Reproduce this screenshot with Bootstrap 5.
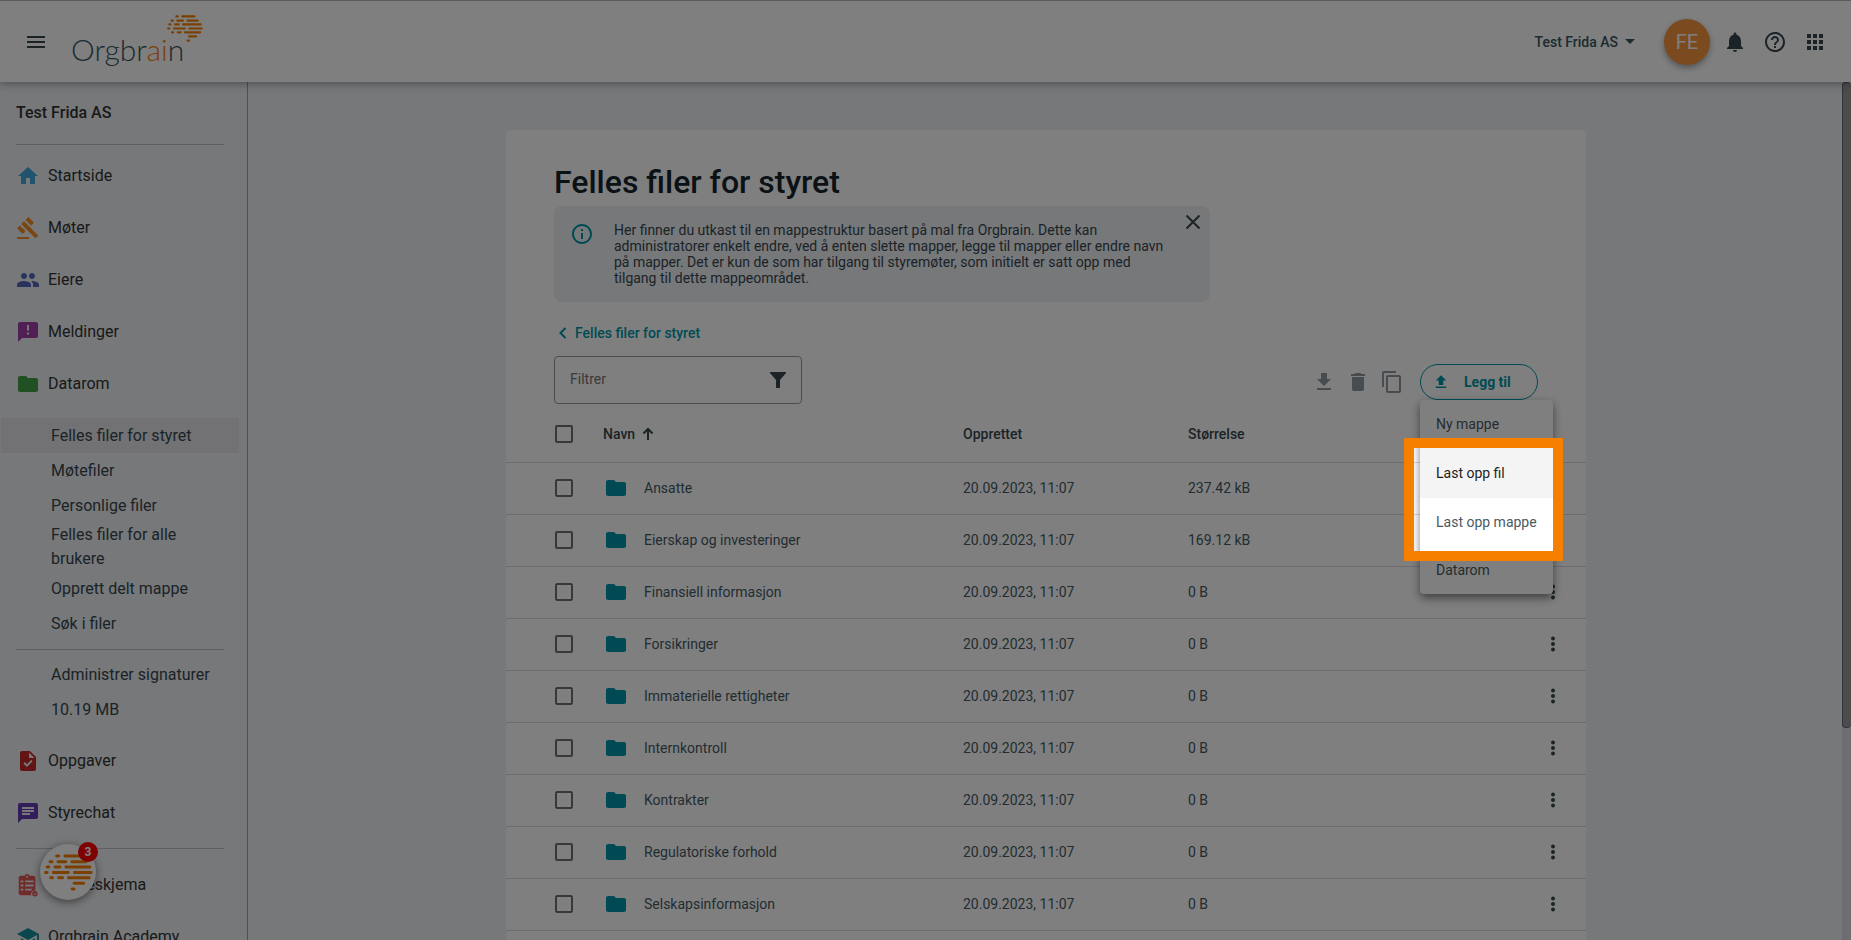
<!DOCTYPE html>
<html lang="nb">
<head>
<meta charset="utf-8">
<meta name="viewport" content="width=device-width, initial-scale=1">
<title>Felles filer for styret – Orgbrain</title>
<link href="https://cdn.jsdelivr.net/npm/bootstrap@5.3.0/dist/css/bootstrap.min.css" rel="stylesheet">
<style>
  :root { --teal: #0097a7; --ink: #37474f; --canvas: #eef0f4; --orange: #f77f00; }
  body { font-family: Roboto, "Noto Sans", sans-serif; font-size: 14px; line-height: 20px; color: var(--ink); background: var(--canvas); }
  svg { display: block; flex: none; fill: currentColor; }
  button { border: 0; background: none; padding: 0; color: inherit; }

  .topbar { height: 82px; background: #fff; border-top: 1px solid #b8b8b8; box-shadow: 0 2px 8px rgba(0,0,0,.35); z-index: 5; padding: 0 24px; }
  .brand { color: #37565f; margin-left: 24px; }
  .brand text { font-family: Lato, sans-serif; font-weight: 300; font-size: 30px; }
  .org-switch { font-size: 14px; font-weight: 500; color: #37565f; }
  .avatar { width: 46px; height: 46px; background: #f7943c; color: #fff; font-size: 20px; box-shadow: 0 3px 6px rgba(0,0,0,.35); margin-left: 26px; margin-right: 13px; }

  .workspace { min-height: 0; }
  .sidebar { width: 248px; border-right: 1px solid #9a9ea2; font-size: 16px; line-height: 24px; color: #333; }
  .sidebar a { text-decoration: none; color: inherit; }
  .sidebar hr { margin: 0 23px 0 16px; border-color: #bdbfc3; opacity: 1; }
  .sidebar hr.spaced { margin-top: 9px; margin-bottom: 10px; }
  .sidebar hr.tight { margin-top: 8px; margin-bottom: 7px; }
  .org-name { padding: 19px 16px 19px; font-weight: 500; }
  .main-group { padding: 5px 0 8px; }
  .main-link { height: 52px; padding-left: 16px; gap: 8px; }
  .sub-link { display: flex; align-items: center; min-height: 35px; margin: 0 8px 0 1px; padding-left: 50px; padding-right: 16px; color: var(--ink) !important; }
  .sub-link.current { background: #e4e5e9; }

  .sheet-area { padding-left: 2px; }
  .sheet { width: 100%; max-width: 1080px; margin: 48px auto 0; background: #fff; border-radius: 4px 4px 0 0; }
  .sheet-head { padding: 32px 48px 0; }
  h1 { font-size: 32px; line-height: 40px; font-weight: 500; color: #14242c; margin: 0 0 4px; }
  .notice { max-width: 656px; min-height: 96px; background: var(--canvas); border-radius: 8px; padding: 8px 8px 16px 16px; }
  .notice p { font-size: 14px; line-height: 16px; margin: 8px 0 0 20px; max-width: 556px; }
  .back-link { color: var(--teal); font-weight: 500; text-decoration: none; margin: 21px 0 13px; }
  .filter-box { width: 248px; height: 48px; border: 1px solid #999; border-radius: 4px; padding: 0 11px 0 15px; }
  .filter-box input { min-width: 0; border: 0; outline: 0; background: none; padding: 0 0 2px; color: #666; }
  .filter-box input::placeholder { color: #757575; opacity: 1; }
  .tools { color: #8d989e; margin-top: 4px; gap: 10px; }
  .add-btn { width: 118px; height: 36px; border: 1px solid var(--teal); border-radius: 18px; color: var(--teal); font-weight: 700; padding-left: 11px; gap: 14px; }
  .add-wrap { margin-left: 6px; }
  .add-menu { position: absolute; top: 36px; left: 0; width: 133px; background: #fff; border-radius: 4px; box-shadow: 0 4px 10px rgba(0,0,0,.5); z-index: 30; }
  .add-menu button { display: block; width: 100%; height: 48px; padding: 0 16px; text-align: left; white-space: nowrap; color: #4b5a61; }
  .add-menu button.hovered { height: 50px; background: #f4f4f4; color: #222; }
  /* Frames the two upload choices and dims the rest of the page */
  .spotlight { position: absolute; top: 38px; left: -16px; width: 159px; height: 123px; border: 10px solid var(--orange); box-shadow: 0 0 0 3000px rgba(0,0,0,.5); pointer-events: none; }

  .files { width: 100%; table-layout: fixed; border-collapse: collapse; }
  .files th { height: 58px; font-weight: 500; padding: 3px 0 0; }
  .files td { height: 52px; padding: 0; color: #455a64; }
  .files tr { border-bottom: 1px solid #d8d8d8; }
  .files th:first-child, .files td:first-child { padding-left: 49px; }
  .files input { appearance: none; display: block; width: 18px; height: 18px; margin: 0; border: 2px solid #707070; border-radius: 2px; }
  .files td svg { color: var(--teal); }
  .files td button svg { color: var(--ink); }
  .col-check { width: 97px; }
  .col-date { width: 225px; }
  .col-size { width: 332px; }
  .col-more { width: 66px; }

  .scroll-track { width: 9px; background: #dcdde1; }
  .scroll-thumb { height: 75.3%; background: #989898; border: 1px solid #5b6b74; border-right: 0; border-radius: 4px; }

  .chat-bubble { position: absolute; left: 40px; bottom: 40px; width: 56px; height: 56px; border-radius: 50%; background: #fff; color: var(--orange); box-shadow: 0 2px 8px rgba(0,0,0,.5); z-index: 20; }
  .chat-count { position: absolute; top: -2px; right: -2px; width: 20px; height: 20px; border-radius: 50%; background: #ff0000; color: #fff; font-size: 12px; font-weight: 700; }
</style>
</head>
<body class="vh-100 overflow-hidden d-flex flex-column position-relative">

<svg width="0" height="0" class="position-absolute" aria-hidden="true">
  <symbol id="brain" viewBox="130 400 149 112"><path fill="none" stroke="currentColor" stroke-width="9" stroke-linecap="round" d="M168.500 406h6M193.500 406h50M148.500 423h6M172.500 423h24M214.500 423h43M139.500 439h5M163.500 439h15M196.500 439h73M134.500 456h5M158.500 456h45M222.500 456h51M150.500 472h5M174.500 472h12M204.500 472h63M221.500 489h29M215.500 506h6"/></symbol>
  <symbol id="folder" viewBox="0 0 24 24"><path d="M10 4H4c-1.100 0-2 .9-2 2v12c0 1.100.9 2 2 2h16c1.100 0 2-.9 2-2V8c0-1.100-.9-2-2-2h-8z"/></symbol>
  <symbol id="dots" viewBox="0 0 24 24"><circle cx="12" cy="6.500" r="2"/><circle cx="12" cy="12" r="2"/><circle cx="12" cy="17.500" r="2"/></symbol>
</svg>

<header class="topbar d-flex align-items-center flex-shrink-0 position-relative">
  <button aria-label="Meny"><svg width="24" height="24" viewBox="0 0 24 24"><path d="M3 18h18v-2H3zm0-5h18v-2H3zm0-7v2h18V6z"/></svg></button>
  <a class="brand" href="#" aria-label="Orgbrain"><svg width="134" height="62" viewBox="0 0 134 62">
    <text x="-1" y="50">Orgbr<tspan fill="#f77f00">ai</tspan>n</text>
    <use href="#brain" x="95" y="4" width="36" height="27" color="#f77f00"/></svg></a>
  <div class="d-flex align-items-center ms-auto">
    <button class="org-switch d-flex align-items-center">Test Frida AS<svg class="ms-1" width="16" height="16" viewBox="0 0 16 16"><path d="M3 5h10l-5 5z"/></svg></button>
    <div class="avatar rounded-circle d-flex align-items-center justify-content-center">FE</div>
    <div class="d-flex gap-3">
      <button aria-label="Varsler"><svg width="24" height="24" viewBox="0 0 24 24"><path d="M12 22c1.100 0 2-.9 2-2h-4c0 1.100.9 2 2 2m6-6v-5c0-3.070-1.640-5.640-4.500-6.320V4c0-.83-.67-1.500-1.500-1.500s-1.500.67-1.500 1.500v.68C7.630 5.360 6 7.920 6 11v5l-2 2v1h16v-1z"/></svg></button>
      <button aria-label="Hjelp"><svg width="24" height="24" viewBox="0 0 24 24"><path d="M11 18h2v-2h-2zm1-16C6.480 2 2 6.480 2 12s4.480 10 10 10 10-4.480 10-10S17.520 2 12 2m0 18c-4.410 0-8-3.590-8-8s3.590-8 8-8 8 3.590 8 8-3.590 8-8 8m0-14c-2.210 0-4 1.790-4 4h2c0-1.100.9-2 2-2s2 .9 2 2c0 2-3 1.750-3 5h2c0-2.250 3-2.500 3-5 0-2.210-1.790-4-4-4"/></svg></button>
      <button aria-label="Apper"><svg width="24" height="24" viewBox="0 0 24 24"><path d="M4 8h4V4H4zm6 12h4v-4h-4zm-6 0h4v-4H4zm0-6h4v-4H4zm6 0h4v-4h-4zm6-10v4h4V4zm-6 4h4V4h-4zm6 6h4v-4h-4zm0 6h4v-4h-4z"/></svg></button>
    </div>
  </div>
</header>

<div class="workspace d-flex flex-grow-1">
  <nav class="sidebar flex-shrink-0 overflow-hidden" aria-label="Hovedmeny">
    <div class="org-name">Test Frida AS</div>
    <hr>
    <div class="main-group">
      <a href="#" class="main-link d-flex align-items-center"><svg color="#42a5dc" width="24" height="24" viewBox="0 0 24 24"><path d="M10 20v-6h4v6h5v-8h3L12 3 2 12h3v8z"/></svg>Startside</a>
      <a href="#" class="main-link d-flex align-items-center"><svg color="#f58a1f" width="24" height="24" viewBox="0 0 24 24"><path d="M1 21h12v2H1zM5.240 8.070l2.830-2.830 14.140 14.140-2.830 2.830zM12.320 1l5.660 5.660-2.830 2.830-5.660-5.660zM3.830 9.480l5.660 5.660-2.830 2.830L1 12.310z"/></svg>Møter</a>
      <a href="#" class="main-link d-flex align-items-center"><svg color="#5069bd" width="24" height="24" viewBox="0 0 24 24"><path d="M16 11c1.660 0 2.990-1.340 2.990-3S17.660 5 16 5s-3 1.340-3 3 1.340 3 3 3m-8 0c1.660 0 2.990-1.340 2.990-3S9.660 5 8 5 5 6.340 5 8s1.340 3 3 3m0 2c-2.330 0-7 1.170-7 3.500V19h14v-2.500c0-2.330-4.670-3.500-7-3.500m8 0c-.29 0-.62.020-.97.050 1.160.84 1.970 1.970 1.970 3.450V19h6v-2.500c0-2.330-4.670-3.500-7-3.500"/></svg>Eiere</a>
      <a href="#" class="main-link d-flex align-items-center"><svg color="#a13fa8" width="24" height="24" viewBox="0 0 24 24"><path d="M20 2H4c-1.100 0-2 .9-2 2v18l4-4h14c1.100 0 2-.9 2-2V4c0-1.100-.9-2-2-2m-7 12.500h-2v-2h2zm0-4h-2V5h2z"/></svg>Meldinger</a>
      <a href="#" class="main-link d-flex align-items-center"><svg color="#43a047" width="24" height="24"><use href="#folder"/></svg>Datarom</a>
    </div>
    <a href="#" class="sub-link current">Felles filer for styret</a>
    <a href="#" class="sub-link">Møtefiler</a>
    <a href="#" class="sub-link">Personlige filer</a>
    <a href="#" class="sub-link">Felles filer for alle brukere</a>
    <a href="#" class="sub-link">Opprett delt mappe</a>
    <a href="#" class="sub-link">Søk i filer</a>
    <hr class="tight">
    <a href="#" class="sub-link">Administrer signaturer</a>
    <div class="sub-link mb-2">10.19 MB</div>
    <a href="#" class="main-link d-flex align-items-center"><svg color="#c62828" width="24" height="24" viewBox="0 0 24 24"><path d="M14 2H6c-1.100 0-2 .9-2 2v16c0 1.100.9 2 2 2h12c1.100 0 2-.9 2-2V8zm-3.060 16L7.400 14.460l1.410-1.410 2.120 2.120 4.240-4.240 1.410 1.410zM13 9V3.500L18.500 9z"/></svg>Oppgaver</a>
    <a href="#" class="main-link d-flex align-items-center"><svg color="#673ab7" width="24" height="24" viewBox="0 0 24 24"><path d="M20 2H4c-1.100 0-2 .9-2 2v18l4-4h14c1.100 0 2-.9 2-2V4c0-1.100-.9-2-2-2M6 9h12v2H6zm8 5H6v-2h8zm4-6H6V6h12z"/></svg>Styrechat</a>
    <hr class="spaced">
    <a href="#" class="main-link d-flex align-items-center"><svg color="#e05757" width="24" height="24" viewBox="0 0 24 26"><path fill-rule="evenodd" d="M18 3h-4.200a3 3 0 0 0-5.600 0H4c-1.100 0-2 .9-2 2v17c0 1.100.9 2 2 2h11.500a4 4 0 0 1 4.500-5V5c0-1.100-.9-2-2-2M11 3a1 1 0 1 1 0 2 1 1 0 0 1 0-2M4 8h3v2H4zm5 0h9v2H9zm-5 4.500h3v2H4zm5 0h9v2H9zM4 17h3v2H4zm5 0h7v2H9z"/><circle cx="19.500" cy="22.500" r="3"/><path d="M18 22.500l1.200 1.200 2-2.200" fill="none" stroke="#eef0f4"/></svg>Spørreskjema</a>
    <a href="#" class="main-link d-flex align-items-center"><svg color="#17919c" width="24" height="24" viewBox="0 0 24 24"><path d="M5 13.180v4L12 21l7-3.820v-4L12 17zM12 3 1 9l11 6 9-4.910V17h2V9z"/></svg>Orgbrain Academy</a>
  </nav>

  <main class="sheet-area flex-grow-1 d-flex">
    <section class="sheet">
      <div class="sheet-head">
        <h1>Felles filer for styret</h1>
        <div class="notice d-flex align-items-start">
          <svg class="mt-2" color="#0097a7" width="24" height="24" viewBox="0 0 24 24"><path d="M11 7h2v2h-2zm0 4h2v6h-2zm1-9C6.480 2 2 6.480 2 12s4.480 10 10 10 10-4.480 10-10S17.520 2 12 2m0 18c-4.410 0-8-3.590-8-8s3.590-8 8-8 8 3.590 8 8-3.590 8-8 8"/></svg>
          <p>Her finner du utkast til en mappestruktur basert på mal fra Orgbrain. Dette kan administratorer enkelt endre, ved å enten slette mapper, legge til mapper eller endre navn på mapper. Det er kun de som har tilgang til styremøter, som initielt er satt opp med tilgang til dette mappeområdet.</p>
          <button class="ms-auto" aria-label="Lukk"><svg width="18" height="18" viewBox="0 0 18 18"><path d="M2.500 1.500l13 13M15.500 1.500l-13 13" fill="none" stroke="currentColor" stroke-width="2"/></svg></button>
        </div>
        <div class="d-flex"><a class="back-link d-flex align-items-center" href="#"><svg width="21" height="20" viewBox="0 0 21 20"><path d="M11.500 5L6.500 10l5 5" fill="none" stroke="currentColor" stroke-width="2"/></svg>Felles filer for styret</a></div>
        <div class="d-flex justify-content-between align-items-center">
          <label class="filter-box d-flex align-items-center">
            <input class="flex-grow-1" type="text" placeholder="Filtrer" aria-label="Filtrer">
            <svg width="24" height="24" viewBox="0 0 24 24"><path d="M4 4h16v1l-6 7v8h-4v-8L4 5z"/></svg>
          </label>
          <div class="tools d-flex align-items-center">
            <button aria-label="Last ned"><svg width="24" height="24" viewBox="0 0 24 24"><path d="M19 9h-4V3H9v6H5l7 7zM5 18v2h14v-2z"/></svg></button>
            <button aria-label="Slett"><svg width="24" height="24" viewBox="0 0 24 24"><path d="M6 19c0 1.100.9 2 2 2h8c1.100 0 2-.9 2-2V7H6zM19 4h-3.500l-1-1h-5l-1 1H5v2h14z"/></svg></button>
            <button aria-label="Kopier"><svg width="24" height="24" viewBox="0 0 24 24"><path d="M16 1H4c-1.100 0-2 .9-2 2v14h2V3h12zm3 4H8c-1.100 0-2 .9-2 2v14c0 1.100.9 2 2 2h11c1.100 0 2-.9 2-2V7c0-1.100-.9-2-2-2m0 16H8V7h11z"/></svg></button>
            <div class="add-wrap position-relative">
              <button class="add-btn d-flex align-items-center"><svg width="18" height="18" viewBox="0 0 24 24"><path d="M9 16h6v-6h4l-7-7-7 7h4zm-4 2h14v2H5z"/></svg>Legg til</button>
              <div class="add-menu">
                <button>Ny mappe</button>
                <button class="hovered">Last opp fil</button>
                <button>Last opp mappe</button>
                <button>Datarom</button>
                <div class="spotlight"></div>
              </div>
            </div>
          </div>
        </div>
      </div>
      <table class="files">
        <colgroup><col class="col-check"><col><col class="col-date"><col class="col-size"><col class="col-more"></colgroup>
        <thead><tr>
          <th><input type="checkbox" aria-label="Velg alle"></th>
          <th><span class="d-flex align-items-center">Navn<svg class="ms-1" width="18" height="18" viewBox="0 0 18 18"><path d="M9 15V4M4.500 8.500L9 4l4.500 4.500" fill="none" stroke="currentColor" stroke-width="2"/></svg></span></th>
          <th>Opprettet</th><th>Størrelse</th><th></th>
        </tr></thead>
        <tbody>
          <tr><td><input type="checkbox" aria-label="Velg Ansatte"></td><td><span class="d-flex align-items-center gap-3"><svg width="25" height="24"><use href="#folder" x="1" width="24" height="24"/></svg>Ansatte</span></td><td>20.09.2023, 11:07</td><td>237.42 kB</td><td></td></tr>
          <tr><td><input type="checkbox" aria-label="Velg Eierskap og investeringer"></td><td><span class="d-flex align-items-center gap-3"><svg width="25" height="24"><use href="#folder" x="1" width="24" height="24"/></svg>Eierskap og investeringer</span></td><td>20.09.2023, 11:07</td><td>169.12 kB</td><td></td></tr>
          <tr><td><input type="checkbox" aria-label="Velg Finansiell informasjon"></td><td><span class="d-flex align-items-center gap-3"><svg width="25" height="24"><use href="#folder" x="1" width="24" height="24"/></svg>Finansiell informasjon</span></td><td>20.09.2023, 11:07</td><td>0 B</td><td><button class="d-block mx-auto" aria-label="Mer"><svg width="24" height="24"><use href="#dots"/></svg></button></td></tr>
          <tr><td><input type="checkbox" aria-label="Velg Forsikringer"></td><td><span class="d-flex align-items-center gap-3"><svg width="25" height="24"><use href="#folder" x="1" width="24" height="24"/></svg>Forsikringer</span></td><td>20.09.2023, 11:07</td><td>0 B</td><td><button class="d-block mx-auto" aria-label="Mer"><svg width="24" height="24"><use href="#dots"/></svg></button></td></tr>
          <tr><td><input type="checkbox" aria-label="Velg Immaterielle rettigheter"></td><td><span class="d-flex align-items-center gap-3"><svg width="25" height="24"><use href="#folder" x="1" width="24" height="24"/></svg>Immaterielle rettigheter</span></td><td>20.09.2023, 11:07</td><td>0 B</td><td><button class="d-block mx-auto" aria-label="Mer"><svg width="24" height="24"><use href="#dots"/></svg></button></td></tr>
          <tr><td><input type="checkbox" aria-label="Velg Internkontroll"></td><td><span class="d-flex align-items-center gap-3"><svg width="25" height="24"><use href="#folder" x="1" width="24" height="24"/></svg>Internkontroll</span></td><td>20.09.2023, 11:07</td><td>0 B</td><td><button class="d-block mx-auto" aria-label="Mer"><svg width="24" height="24"><use href="#dots"/></svg></button></td></tr>
          <tr><td><input type="checkbox" aria-label="Velg Kontrakter"></td><td><span class="d-flex align-items-center gap-3"><svg width="25" height="24"><use href="#folder" x="1" width="24" height="24"/></svg>Kontrakter</span></td><td>20.09.2023, 11:07</td><td>0 B</td><td><button class="d-block mx-auto" aria-label="Mer"><svg width="24" height="24"><use href="#dots"/></svg></button></td></tr>
          <tr><td><input type="checkbox" aria-label="Velg Regulatoriske forhold"></td><td><span class="d-flex align-items-center gap-3"><svg width="25" height="24"><use href="#folder" x="1" width="24" height="24"/></svg>Regulatoriske forhold</span></td><td>20.09.2023, 11:07</td><td>0 B</td><td><button class="d-block mx-auto" aria-label="Mer"><svg width="24" height="24"><use href="#dots"/></svg></button></td></tr>
          <tr><td><input type="checkbox" aria-label="Velg Selskapsinformasjon"></td><td><span class="d-flex align-items-center gap-3"><svg width="25" height="24"><use href="#folder" x="1" width="24" height="24"/></svg>Selskapsinformasjon</span></td><td>20.09.2023, 11:07</td><td>0 B</td><td><button class="d-block mx-auto" aria-label="Mer"><svg width="24" height="24"><use href="#dots"/></svg></button></td></tr>
        </tbody>
      </table>
    </section>
  </main>
  <div class="scroll-track flex-shrink-0"><div class="scroll-thumb"></div></div>
</div>

<button class="chat-bubble d-flex align-items-center justify-content-center" aria-label="Åpne chat"><svg width="49" height="37"><use href="#brain"/></svg><span class="chat-count d-flex align-items-center justify-content-center">3</span></button>

<script src="https://cdn.jsdelivr.net/npm/bootstrap@5.3.0/dist/js/bootstrap.bundle.min.js"></script>
</body>
</html>
